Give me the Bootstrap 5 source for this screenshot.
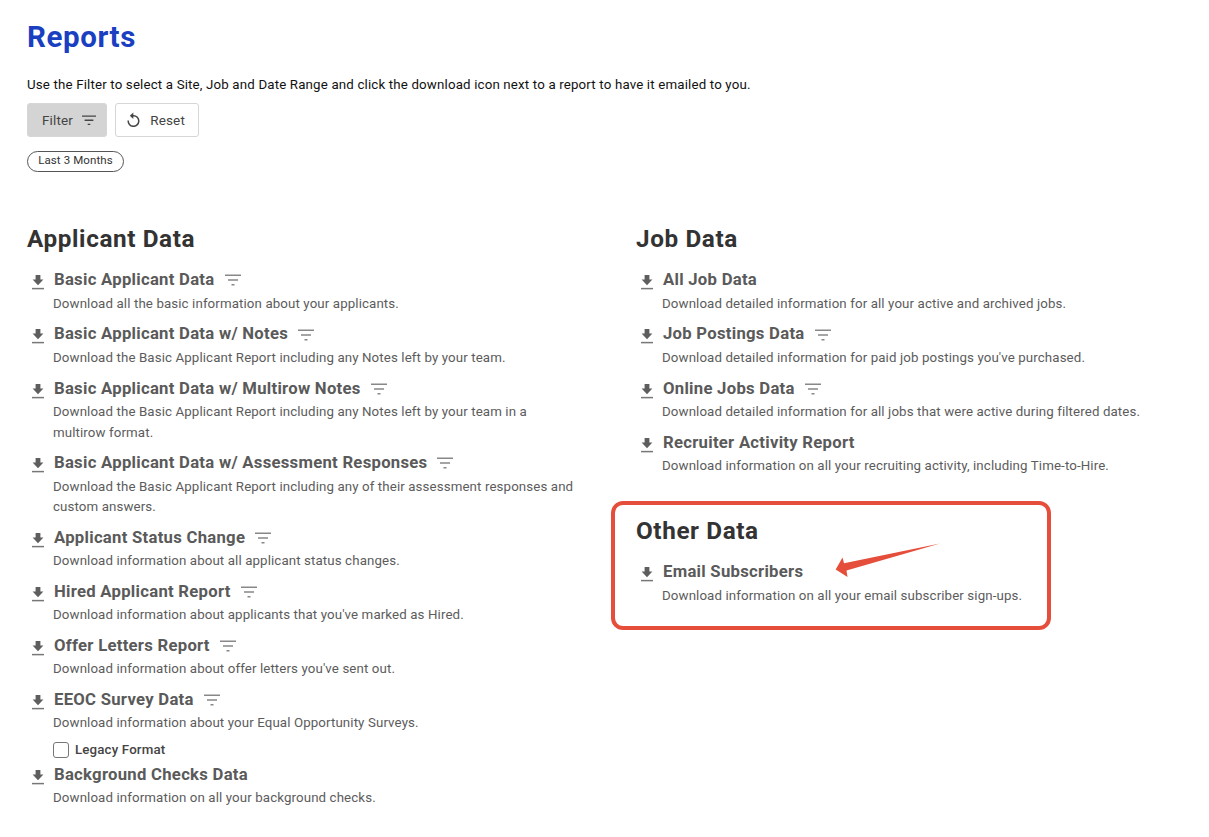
<!DOCTYPE html>
<html lang="en">
<head>
    <meta charset="UTF-8">
    <meta name="viewport" content="width=device-width, initial-scale=1.0">
    <title>Reports</title>
    <link href="https://cdn.jsdelivr.net/npm/bootstrap@5.3.0/dist/css/bootstrap.min.css" rel="stylesheet">
    <style>
        body {
            font-family: Roboto, "Liberation Sans", sans-serif;
            font-size: 13.3px;
            color: #111;
            background: #fff;
            overflow: hidden;
        }
        .page {
            padding: 19px 0 0 27px;
        }
        .page-title {
            font-size: 29.5px;
            line-height: 36px;
            font-weight: 700;
            letter-spacing: .6px;
            color: #1a3fc1;
        }
        .intro {
            margin-top: 20px;
            line-height: 20px;
            letter-spacing: .16px;
        }
        .tool-btn {
            height: 34px;
            font-size: 13.5px;
            line-height: 32px;
            letter-spacing: .15px;
            color: #444;
            border: 1px solid #d6d6d6;
            border-radius: 3px;
        }
        .filter-btn {
            width: 80px;
            padding: 0 10px 0 14px;
            background: #d4d4d4;
        }
        .reset-btn {
            width: 84px;
            padding: 0 13px 0 11px;
            background: #fff;
        }
        .reset-btn svg {
            margin-top: -2px;
        }
        .pill {
            width: 97px;
            height: 21px;
            margin-top: 14px;
            font-size: 11.5px;
            line-height: 17px;
            letter-spacing: .1px;
            color: #333;
            border: 1px solid #555;
            border-radius: 11px;
        }
        .columns {
            margin-top: 49px;
        }
        .col-applicant {
            width: 609px;
        }
        .group-title {
            font-size: 24.3px;
            line-height: 36px;
            font-weight: 700;
            letter-spacing: .6px;
            color: #333;
            margin-bottom: 11.4px;
        }
        .report {
            padding-left: 4px;
            margin-bottom: 8.1px;
        }
        .report-icon {
            width: 14px;
            height: 16px;
            margin-top: 6px;
            margin-right: 8px;
        }
        .report-body {
            width: 526px;
        }
        .report-name {
            font-size: 16.7px;
            line-height: 24px;
            font-weight: 700;
            letter-spacing: .27px;
            color: #5a5a5a;
            padding-left: 1px;
            white-space: nowrap;
        }
        .report-name svg {
            margin-left: 10px;
            margin-top: -1px;
        }
        .report-text {
            margin-top: 1.6px;
            line-height: 20.4px;
            letter-spacing: .11px;
            color: #5c5c5c;
        }
        .legacy {
            height: 20px;
            margin-top: 6.6px;
            margin-bottom: -6px;
            color: #444;
            font-weight: 500;
            letter-spacing: .15px;
        }
        .legacy input {
            width: 16px;
            height: 16px;
            margin: 0 6px 0 0;
            border: 1px solid #777;
            border-radius: 3px !important;
        }
        .highlight {
            width: 440px;
            height: 129px;
            margin: 24.6px 0 0 -25px;
            padding: 8px 0 0 21px;
            border: 4px solid #e54e3a;
            border-radius: 12px;
        }
        .highlight .group-title {
            margin-bottom: 11px;
        }
        .arrow {
            left: 220px;
            top: 38px;
        }
    </style>
</head>
<body>
    <svg class="d-none">
        <symbol id="download" viewBox="0 0 14 16">
            <path d="M4.600 1h4.800v4.600h3L7 11.200 1.600 5.600h3z" fill="#5e5e5e"/>
            <path d="M1 14.600h12" stroke="#777" stroke-width="1.500"/>
        </symbol>
        <symbol id="lines" viewBox="0 0 16 12">
            <path d="M0 1.300h16M3 6h10M6.500 10.700h3" stroke="currentColor" stroke-width="1.600"/>
        </symbol>
    </svg>

    <div class="page">
        <h1 class="page-title mb-0">Reports</h1>
        <p class="intro mb-0">Use the Filter to select a Site, Job and Date Range and click the download icon next to a report to have it emailed to you.</p>
        <div class="d-flex gap-2 mt-2">
            <button type="button" class="btn tool-btn filter-btn d-flex align-items-center justify-content-between">Filter <svg width="14" height="10.500" color="#444"><use href="#lines"/></svg></button>
            <button type="button" class="btn tool-btn reset-btn d-flex align-items-center justify-content-between">
                <svg width="13" height="15" viewBox="0 0 13 15"><path d="M1.200 8.500A5.300 5.300 0 1 0 6.500 3.700H4" fill="none" stroke="#444" stroke-width="1.500"/><path d="M6.300 .4v6.600L2.800 3.700z" fill="#444"/></svg>
                <span>Reset</span>
            </button>
        </div>
        <div class="pill text-center">Last 3 Months</div>

        <div class="columns d-flex">
            <div class="col-applicant flex-shrink-0">
                <h2 class="group-title">Applicant Data</h2>
                <div class="report d-flex">
                    <svg class="report-icon"><use href="#download"/></svg>
                    <div class="report-body">
                        <div class="report-name">Basic Applicant Data<svg width="16" height="12" color="#888"><use href="#lines"/></svg></div>
                        <div class="report-text">Download all the basic information about your applicants.</div>
                    </div>
                </div>
                <div class="report d-flex">
                    <svg class="report-icon"><use href="#download"/></svg>
                    <div class="report-body">
                        <div class="report-name">Basic Applicant Data w/ Notes<svg width="16" height="12" color="#888"><use href="#lines"/></svg></div>
                        <div class="report-text">Download the Basic Applicant Report including any Notes left by your team.</div>
                    </div>
                </div>
                <div class="report d-flex">
                    <svg class="report-icon"><use href="#download"/></svg>
                    <div class="report-body">
                        <div class="report-name">Basic Applicant Data w/ Multirow Notes<svg width="16" height="12" color="#888"><use href="#lines"/></svg></div>
                        <div class="report-text">Download the Basic Applicant Report including any Notes left by your team in a<br>multirow format.</div>
                    </div>
                </div>
                <div class="report d-flex">
                    <svg class="report-icon"><use href="#download"/></svg>
                    <div class="report-body">
                        <div class="report-name">Basic Applicant Data w/ Assessment Responses<svg width="16" height="12" color="#888"><use href="#lines"/></svg></div>
                        <div class="report-text">Download the Basic Applicant Report including any of their assessment responses and<br>custom answers.</div>
                    </div>
                </div>
                <div class="report d-flex">
                    <svg class="report-icon"><use href="#download"/></svg>
                    <div class="report-body">
                        <div class="report-name">Applicant Status Change<svg width="16" height="12" color="#888"><use href="#lines"/></svg></div>
                        <div class="report-text">Download information about all applicant status changes.</div>
                    </div>
                </div>
                <div class="report d-flex">
                    <svg class="report-icon"><use href="#download"/></svg>
                    <div class="report-body">
                        <div class="report-name">Hired Applicant Report<svg width="16" height="12" color="#888"><use href="#lines"/></svg></div>
                        <div class="report-text">Download information about applicants that you've marked as Hired.</div>
                    </div>
                </div>
                <div class="report d-flex">
                    <svg class="report-icon"><use href="#download"/></svg>
                    <div class="report-body">
                        <div class="report-name">Offer Letters Report<svg width="16" height="12" color="#888"><use href="#lines"/></svg></div>
                        <div class="report-text">Download information about offer letters you've sent out.</div>
                    </div>
                </div>
                <div class="report d-flex">
                    <svg class="report-icon"><use href="#download"/></svg>
                    <div class="report-body">
                        <div class="report-name">EEOC Survey Data<svg width="16" height="12" color="#888"><use href="#lines"/></svg></div>
                        <div class="report-text">Download information about your Equal Opportunity Surveys.</div>
                        <label class="legacy d-flex align-items-center"><input type="checkbox" class="form-check-input">Legacy Format</label>
                    </div>
                </div>
                <div class="report d-flex">
                    <svg class="report-icon"><use href="#download"/></svg>
                    <div class="report-body">
                        <div class="report-name">Background Checks Data</div>
                        <div class="report-text">Download information on all your background checks.</div>
                    </div>
                </div>
            </div>

            <div class="flex-grow-1">
                <h2 class="group-title">Job Data</h2>
                <div class="report d-flex">
                    <svg class="report-icon"><use href="#download"/></svg>
                    <div class="report-body">
                        <div class="report-name">All Job Data</div>
                        <div class="report-text">Download detailed information for all your active and archived jobs.</div>
                    </div>
                </div>
                <div class="report d-flex">
                    <svg class="report-icon"><use href="#download"/></svg>
                    <div class="report-body">
                        <div class="report-name">Job Postings Data<svg width="16" height="12" color="#888"><use href="#lines"/></svg></div>
                        <div class="report-text">Download detailed information for paid job postings you've purchased.</div>
                    </div>
                </div>
                <div class="report d-flex">
                    <svg class="report-icon"><use href="#download"/></svg>
                    <div class="report-body">
                        <div class="report-name">Online Jobs Data<svg width="16" height="12" color="#888"><use href="#lines"/></svg></div>
                        <div class="report-text">Download detailed information for all jobs that were active during filtered dates.</div>
                    </div>
                </div>
                <div class="report d-flex">
                    <svg class="report-icon"><use href="#download"/></svg>
                    <div class="report-body">
                        <div class="report-name">Recruiter Activity Report</div>
                        <div class="report-text">Download information on all your recruiting activity, including Time-to-Hire.</div>
                    </div>
                </div>

                <div class="highlight position-relative">
                    <h2 class="group-title">Other Data</h2>
                    <div class="report d-flex">
                        <svg class="report-icon"><use href="#download"/></svg>
                        <div>
                            <div class="report-name">Email Subscribers</div>
                            <div class="report-text">Download information on all your email subscriber sign-ups.</div>
                        </div>
                    </div>
                    <svg class="arrow position-absolute" width="106" height="36" viewBox="0 0 106 36"><path d="M.7 26.500L7.500 14.500 9 20.300 105 .5 11.500 27.500 12.500 34z" fill="#e54e3a"/></svg>
                </div>
            </div>
        </div>
    </div>

    <script src="https://cdn.jsdelivr.net/npm/bootstrap@5.3.0/dist/js/bootstrap.bundle.min.js"></script>
</body>
</html>
